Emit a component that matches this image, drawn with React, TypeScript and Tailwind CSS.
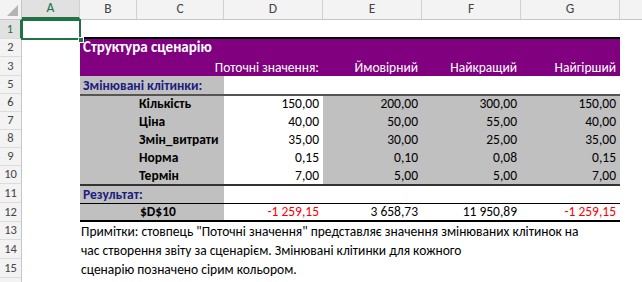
import type { ReactNode } from "react";

const font = { fontFamily: "Carlito, Lato, 'Open Sans', sans-serif" };

type CellProps = { w: string; className?: string; children?: ReactNode };

function Cell({ w, className = "", children }: CellProps) {
  return (
    <div className={`${w} shrink-0 h-full flex items-end pb-[1px] leading-[15px] overflow-visible whitespace-nowrap ${className}`}>
      {children}
    </div>
  );
}

function RowHead({ n, active = false }: { n: string; active?: boolean }) {
  return (
    <div
      className={`w-[22px] shrink-0 h-full flex items-center justify-center text-[12.5px] border-b border-[#dcdcdc] ${
        active ? "bg-[#e1e1e1] text-[#217346] border-r-2 border-r-[#217346]" : "bg-[#f3f3f3] text-[#444] border-r border-r-[#c6c6c6]"
      }`}
    >
      {n}
    </div>
  );
}

function Row({ n, h, children, active }: { n: string; h: string; children?: ReactNode; active?: boolean }) {
  return (
    <div className={`flex ${h}`}>
      <RowHead n={n} active={active} />
      {children}
    </div>
  );
}

const B = "w-[57px]";
const BC = "w-[144px]";
const D = "w-[99px]";
const A = "w-[58px]";
const gray = "bg-[#c0c0c0]";
const num = "justify-end pr-[4px]";

const inputs = [
  ["Кількість", "150,00", "200,00", "300,00", "150,00"],
  ["Ціна", "40,00", "50,00", "55,00", "40,00"],
  ["Змін_витрати", "35,00", "30,00", "25,00", "35,00"],
  ["Норма", "0,15", "0,10", "0,08", "0,15"],
  ["Термін", "7,00", "5,00", "5,00", "7,00"],
];

export default function App() {
  return (
    <div className="w-[642px] h-[282px] overflow-hidden bg-white text-[13.5px] text-black" style={font}>
      {/* column headers */}
      <div className="flex h-[20px] bg-[#f3f3f3] border-b border-[#c6c6c6] text-[13.5px] text-[#444]">
        <div className="w-[22px] shrink-0 border-r border-[#c6c6c6] relative">
          <svg width="22" height="20" className="absolute inset-0">
            <polygon points="7,16 18,16 18,5" fill="#b4b4b4" />
          </svg>
        </div>
        <div className={`${A} shrink-0 flex items-center justify-center bg-[#e1e1e1] text-[#217346] border-b-2 border-[#217346] border-r border-r-[#d0d0d0]`}>A</div>
        {["B", "C", "D", "E", "F", "G"].map((l, i) => (
          <div key={l} className={`${i === 0 ? B : i === 1 ? "w-[87px]" : D} shrink-0 flex items-center justify-center border-r border-[#d0d0d0]`}>
            {l}
          </div>
        ))}
        <div className="flex-1" />
      </div>

      <Row n="1" h="h-[19px]" active>
        <Cell w={A} className="relative">
          <div className="absolute left-[-1px] top-[-1px] right-[-1px] bottom-[-1px] border-2 border-[#217346]" />
          <div className="absolute right-[-4px] bottom-[-4px] w-[6px] h-[6px] bg-[#217346] border border-white" />
        </Cell>
        <Cell w="w-[540px]" className="border-b-2 border-black" />
      </Row>

      <Row n="2" h="h-[18px]">
        <Cell w={A} />
        <Cell w="w-[540px]" className="bg-[#800080] text-white font-bold text-[15px] pl-[3px] pb-0 leading-[17px]">
          Структура сценарію
        </Cell>
      </Row>

      <Row n="3" h="h-[19px]">
        <Cell w={A} />
        <Cell w={BC} className="bg-[#800080]" />
        {["Поточні значення:", "Ймовірний", "Найкращий", "Найгірший"].map((t) => (
          <Cell key={t} w={D} className={`bg-[#800080] text-white ${num}`}>
            {t}
          </Cell>
        ))}
      </Row>

      <Row n="5" h="h-[18px]">
        <Cell w={A} />
        <Cell w={BC} className={`${gray} text-[#1c1c80] font-bold pl-[3px]`}>
          Змінювані клітинки:
        </Cell>
        <Cell w="w-[396px]" />
      </Row>

      {inputs.map((r, i) => (
        <Row key={r[0]} n={String(i + 6)} h="h-[18px]">
          <Cell w={A} />
          <Cell w={B} className={`${gray} ${i === 0 ? "border-t-2 border-[#555]" : ""}`} />
          <Cell w="w-[87px]" className={`${gray} font-bold pl-[2px] ${i === 0 ? "border-t-2 border-[#555]" : ""}`}>
            {r[0]}
          </Cell>
          {r.slice(1).map((v, j) => (
            <Cell
              key={j}
              w={D}
              className={`${num} ${j === 0 ? "bg-white" : gray} ${i === 0 ? "border-t-2 border-[#555]" : ""}`}
            >
              {v}
            </Cell>
          ))}
        </Row>
      ))}

      <Row n="11" h="h-[19px]">
        <Cell w={A} />
        <Cell w={BC} className={`${gray} text-[#1c1c80] font-bold pl-[3px] border-t-2 border-[#333]`}>
          Результат:
        </Cell>
        <Cell w="w-[396px]" className="border-t-2 border-[#333]" />
      </Row>

      <Row n="12" h="h-[19px]">
        <Cell w={A} />
        <Cell w={B} className={`${gray} border-t border-b-2 border-black`} />
        <Cell w="w-[87px]" className={`${gray} font-bold pl-[3px] border-t border-b-2 border-black`}>
          $D$10
        </Cell>
        {["-1 259,15", "3 658,73", "11 950,89", "-1 259,15"].map((v, j) => (
          <Cell
            key={j}
            w={D}
            className={`${num} border-t border-b-2 border-black ${v.startsWith("-") ? "text-[#ff0000]" : ""}`}
          >
            {v}
          </Cell>
        ))}
      </Row>

      {[
        ["13", "h-[18px]", "Примітки: стовпець \"Поточні значення\" представляє значення змінюваних клітинок на"],
        ["14", "h-[19px]", "час створення звіту за сценарієм. Змінювані клітинки для кожного"],
        ["15", "h-[19px]", "сценарію позначено сірим кольором."],
      ].map(([n, h, t]) => (
        <Row key={n} n={n} h={h}>
          <Cell w={A} />
          <Cell w="w-[540px]" className="pl-[1px]">
            {t}
          </Cell>
        </Row>
      ))}

      <Row n="" h="h-[19px]" />
    </div>
  );
}
